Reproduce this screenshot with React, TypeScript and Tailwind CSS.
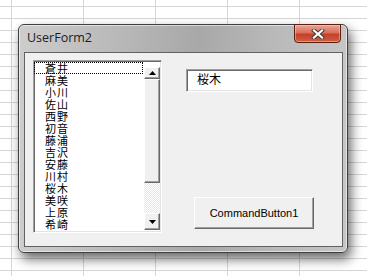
const names = [
  "蒼井",
  "麻美",
  "小川",
  "佐山",
  "西野",
  "初音",
  "藤浦",
  "吉沢",
  "安藤",
  "川村",
  "桜木",
  "美咲",
  "上原",
  "希崎",
];

const raised =
  "border border-t-white border-l-white border-r-[#696969] border-b-[#696969] shadow-[inset_-1px_-1px_0_#a0a0a0]";
const sunken =
  "border border-t-[#a0a0a0] border-l-[#a0a0a0] border-r-white border-b-white shadow-[inset_1px_1px_0_#696969,inset_-1px_-1px_0_#e3e3e3]";

function Arrow({ up }: { up?: boolean }) {
  return (
    <svg width="7" height="4" viewBox="0 0 7 4">
      <path d={up ? "M3.5 0 L7 4 L0 4 Z" : "M0 0 L7 0 L3.5 4 Z"} fill="#000" />
    </svg>
  );
}

function CloseButton() {
  return (
    <div className="mr-[6px] -mt-px flex h-[19px] w-[47px] items-center justify-center rounded-b-[4px] border border-[#5b1d12] bg-[linear-gradient(to_bottom,#e9a395,#d9705c_45%,#c4402a_55%,#d0603f)] shadow-[inset_0_0_0_1px_rgba(255,220,210,0.45)]">
      <svg width="14" height="10" viewBox="0 0 14 10">
        <path d="M3 1.5 L11 8.5 M11 1.5 L3 8.5" stroke="#3a3a3a" strokeWidth="4" strokeLinecap="square" />
        <path d="M3 1.5 L11 8.5 M11 1.5 L3 8.5" stroke="#ffffff" strokeWidth="2.2" strokeLinecap="square" />
      </svg>
    </div>
  );
}

function ListBox() {
  return (
    <div className={`flex h-[173px] w-[129px] bg-white ${sunken}`}>
      <div className="flex flex-1 flex-col pt-px">
        {names.map((n, i) => (
          <div
            key={n}
            className={`h-[12px] pl-[11px] text-[11px] leading-[12px] tracking-[1px] text-black ${
              i === 0 ? "mr-px outline-1 -outline-offset-1 outline-dotted outline-black" : ""
            }`}
          >
            {n}
          </div>
        ))}
      </div>
      <div className="mr-px mt-px flex w-[16px] flex-col">
        <div className="h-[5px] bg-white" />
        <div className={`flex h-[12px] items-center justify-center bg-[#f0f0f0] ${raised}`}>
          <Arrow up />
        </div>
        <div className={`h-[104px] bg-[#f0f0f0] ${raised}`} />
        <div className="h-[30px] bg-[repeating-conic-gradient(#ffffff_0_25%,#e6e6e6_0_50%)] bg-[length:2px_2px]" />
        <div className={`flex h-[17px] items-center justify-center bg-[#f0f0f0] ${raised}`}>
          <Arrow />
        </div>
      </div>
    </div>
  );
}

export default function App() {
  return (
    <div className="h-[276px] w-[367px] overflow-hidden bg-white bg-[linear-gradient(to_right,#d6d6d6_1px,transparent_1px),linear-gradient(to_bottom,#d6d6d6_1px,transparent_1px)] bg-[length:72px_12px] bg-[position:11px_6px] pl-[18px] pt-[24px] font-['Noto_Sans_CJK_JP',sans-serif]">
      <div className="flex h-[229px] w-[330px] flex-col rounded-[6px] border border-[#3f3f3f] bg-[linear-gradient(to_right,#cdcdcd,#bcbcbc_25%,#a8a8a8_55%,#b9b9b9_78%,#c6c6c6)] shadow-[inset_0_0_0_1px_rgba(255,255,255,0.55),3px_6px_12px_rgba(0,0,0,0.6)]">
        <div className="flex h-[27px] items-start justify-between">
          <div className="pl-[8px] pt-[5px] font-['Open_Sans',sans-serif] text-[12.5px] leading-[16px] text-[#1c1c1c]">
            UserForm2
          </div>
          <CloseButton />
        </div>
        <div className="ml-[5px] flex h-[195px] w-[319px] items-start border border-[#626262] bg-[#f0f0f0] pl-[8px] pt-[7px]">
          <ListBox />
          <div className="ml-[24px] flex flex-col">
            <div className={`mt-[9px] h-[23px] w-[127px] bg-white pl-[10px] pt-[2px] text-[12px] leading-[14px] text-black ${sunken}`}>
              桜木
            </div>
            <div
              className={`ml-[8px] mt-[105px] flex h-[32px] w-[120px] items-center justify-center bg-[#f0f0f0] font-['Liberation_Sans',sans-serif] text-[11px] text-black ${raised}`}
            >
              CommandButton1
            </div>
          </div>
        </div>
      </div>
    </div>
  );
}
